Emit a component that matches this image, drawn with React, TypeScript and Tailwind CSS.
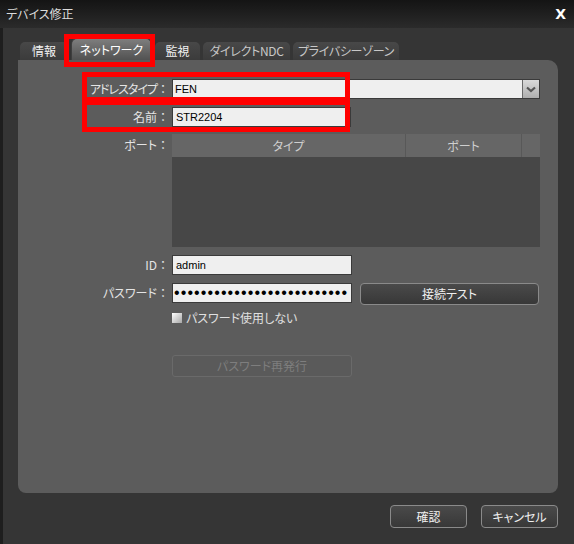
import React from 'react'

const jp = "font-['Noto_Sans_CJK_JP',sans-serif] [font-feature-settings:'palt']"

const tabs = [
  { label: '情報', w: 'w-[48px]', bright: true },
  { label: 'ネットワーク', w: 'w-[81px]', active: true },
  { label: '監視', w: 'w-[45px]', bright: true },
  { label: 'ダイレクトNDC', w: 'w-[87px]' },
  { label: 'プライバシーゾーン', w: 'w-[106px]' },
]

function Label({ children, className = '' }: { children: React.ReactNode; className?: string }) {
  return (
    <div className={`w-[154px] shrink-0 pr-[3px] text-right text-[12px] leading-[20px] text-[#e4e4e4] ${className}`}>
      {children}
      <span className="[font-feature-settings:normal]">：</span>
    </div>
  )
}

function Field({ value, className }: { value: string; className: string }) {
  return (
    <div
      className={`h-[20px] border border-[#3a3a3a] bg-[#efefef] pl-[3px] font-['Liberation_Sans',sans-serif] text-[11px] leading-[18px] text-black ${className}`}
    >
      {value}
    </div>
  )
}

function GrayButton({ children, className }: { children: React.ReactNode; className: string }) {
  return (
    <button
      className={`rounded-[4px] border border-[#8a8a8a] bg-gradient-to-b from-[#4a4a4a] to-[#383838] text-[12px] text-[#f0f0f0] ${className}`}
    >
      {children}
    </button>
  )
}

export default function App() {
  return (
    <div className={`relative h-[544px] w-[574px] overflow-hidden bg-[#353535] ${jp}`}>
      {/* title bar */}
      <div className="flex h-[28px] items-center justify-between bg-gradient-to-b from-[#141414] to-[#2b2b2b] pl-[6px] pr-[8px]">
        <span className="text-[12px] text-[#dcdcdc]">デバイス修正</span>
        <span className="font-['DejaVu_Sans',sans-serif] text-[14px] font-bold text-white">X</span>
      </div>

      <div className="h-[516px] border-l-[3px] border-[#1e1e1e]">
        {/* tabs */}
        <div className="flex h-[32px] items-end gap-[3px] pl-[17px]">
          {tabs.map((t) =>
            t.active ? (
              <div
                key={t.label}
                className={`${t.w} flex h-[22px] items-center justify-center rounded-t-[6px] border-x border-t border-[#3e3e3e] bg-gradient-to-b from-[#7e7e7e] to-[#525252] text-[12px] text-white`}
              >
                {t.label}
              </div>
            ) : (
              <div
                key={t.label}
                className={`${t.w} flex h-[18px] items-center justify-center rounded-t-[5px] bg-gradient-to-b from-[#484848] to-[#3b3b3b] text-[12px] ${t.bright ? 'text-[#f2f2f2]' : 'text-[#c8c8c8] tracking-[-0.3px]'}`}
              >
                {t.label}
              </div>
            ),
          )}
        </div>

        {/* panel */}
        <div className="ml-[15px] flex h-[433px] w-[540px] flex-col rounded-tr-[10px] rounded-b-[8px] bg-[#5c5c5c] pt-[19px]">
          <div className="flex">
            <Label>
              <span className="tracking-[-1px]">アドレスタイプ</span>
            </Label>
            <div className="flex h-[20px] w-[368px] border border-[#3a3a3a] bg-[#efefef]">
              <div className="flex-1 pl-[2px] font-['Liberation_Sans',sans-serif] text-[11px] leading-[18px] text-black">FEN</div>
              <div className="flex w-[17px] items-center justify-center border-l border-[#6a6a6a] bg-gradient-to-b from-[#dadada] to-[#aeaeae]">
                <svg width="10" height="7" viewBox="0 0 10 7">
                  <path d="M1 1.5 L5 5 L9 1.5" fill="none" stroke="#555" strokeWidth="2.2" />
                </svg>
              </div>
            </div>
          </div>

          <div className="mt-[8px] flex">
            <Label>名前</Label>
            <Field value="STR2204" className="w-[179px]" />
          </div>

          <div className="mt-[7px] flex">
            <Label className="pt-[1px]">ポート</Label>
            <div className="w-[368px]">
              <div className="flex h-[23px] bg-[#666666] text-[12px] text-[#cfcfcf]">
                <div className="flex w-[234px] items-center justify-center border-r border-[#585858]">タイプ</div>
                <div className="flex w-[116px] items-center justify-center border-r border-[#585858]">ポート</div>
                <div className="flex-1" />
              </div>
              <div className="h-[90px] bg-[#474747]" />
            </div>
          </div>

          <div className="mt-[8px] flex">
            <Label>ID</Label>
            <Field value="admin" className="w-[180px]" />
          </div>

          <div className="mt-[8px] flex h-[22px] items-start">
            <Label>パスワード</Label>
            <div className="h-[20px] w-[180px] overflow-hidden whitespace-nowrap border border-[#3a3a3a] bg-[#efefef] pl-[1px] font-['Liberation_Sans',sans-serif] text-[16px] leading-[17px] tracking-[1.1px] text-black">
              ••••••••••••••••••••••••••
            </div>
            <GrayButton className="ml-[8px] h-[22px] w-[179px]">接続テスト</GrayButton>
          </div>

          <div className="mt-[6px] flex h-[14px] items-center pl-[154px]">
            <div className="h-[10px] w-[10px] bg-gradient-to-br from-white to-[#a8a8a8]" />
            <span className="ml-[4px] text-[12px] leading-[14px] text-[#e0e0e0]">パスワード使用しない</span>
          </div>

          <div className="mt-[30px] flex pl-[154px]">
            <button className="h-[22px] w-[180px] rounded-[3px] border border-[#6a6a6a] bg-[#5a5a5a] text-[12px] text-[#7e7e7e]">
              パスワード再発行
            </button>
          </div>
        </div>

        {/* footer */}
        <div className="mt-[12px] flex justify-end gap-[14px] pr-[16px]">
          <GrayButton className="h-[23px] w-[77px]">確認</GrayButton>
          <GrayButton className="h-[23px] w-[77px]">キャンセル</GrayButton>
        </div>
      </div>

      {/* annotation boxes */}
      <div className="absolute left-[64px] top-[34px] h-[33px] w-[91px] border-[5px] border-[#ff0000]" />
      <div className="absolute left-[82px] top-[72px] h-[30px] w-[268px] border-[5px] border-[#ff0000]" />
      <div className="absolute left-[82px] top-[100px] h-[32px] w-[268px] border-[5px] border-[#ff0000]" />
    </div>
  )
}
